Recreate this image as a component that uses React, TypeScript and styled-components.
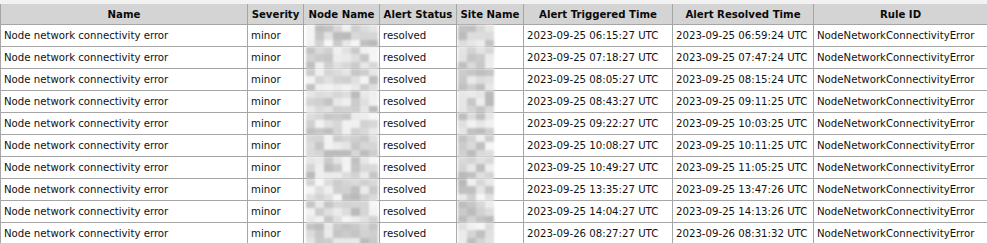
import React from "react";
import styled, { createGlobalStyle } from "styled-components";

const GlobalStyle = createGlobalStyle`
  html, body {
    margin: 0;
    padding: 0;
    background: #f2f2f2;
  }
  body {
    font-family: "DejaVu Sans Condensed", "DejaVu Sans", sans-serif;
    font-size: 11.3px;
    color: #111;
  }
`;

const Page = styled.div`
  padding-top: 4px;
  width: 987px;
`;

const Table = styled.table`
  width: 987px;
  border-collapse: collapse;
  table-layout: fixed;
  background: #fff;
`;

const Th = styled.th`
  height: 20px;
  padding: 0 3px;
  background: #d4d4d4;
  border: 1px solid #a6a6a6;
  border-top: none;
  font-weight: bold;
  text-align: center;
  white-space: nowrap;
  color: #0a0a0a;
`;

const Td = styled.td`
  height: 21px;
  padding: 0 3px;
  border: 1px solid #a6a6a6;
  white-space: nowrap;
  vertical-align: middle;
`;

const MaskCell = styled.td`
  height: 21px;
  padding: 0;
  border: 1px solid #a6a6a6;
  vertical-align: middle;
`;

const Mosaic = styled.div<{ $cols: number; $offset: number }>`
  position: relative;
  z-index: 1;
  height: 23px;
  margin: -1px 0 -2px ${(p) => p.$offset}px;
  display: grid;
  grid-template-columns: repeat(${(p) => p.$cols}, 9px);
  grid-template-rows: repeat(3, 1fr);
  width: ${(p) => p.$cols * 9}px;
  filter: blur(0.8px);
`;

const Tile = styled.div<{ $shade: number }>`
  background: rgb(${(p) => p.$shade}, ${(p) => p.$shade}, ${(p) => p.$shade});
`;

const shade = (seed: number) => {
  const x = Math.sin(seed * 12.9898) * 43758.5453;
  const f = x - Math.floor(x);
  return Math.round(185 + f * 62);
};

const Redacted = ({ cols, offset, seed }: { cols: number; offset: number; seed: number }) => (
  <Mosaic $cols={cols} $offset={offset}>
    {Array.from({ length: cols * 3 }, (_, i) => (
      <Tile key={i} $shade={shade(seed * 100 + i + 1)} />
    ))}
  </Mosaic>
);

const widths = [247, 56, 76, 77, 67, 149, 141, 174];

const rows = [
  ["2023-09-25 06:15:27 UTC", "2023-09-25 06:59:24 UTC"],
  ["2023-09-25 07:18:27 UTC", "2023-09-25 07:47:24 UTC"],
  ["2023-09-25 08:05:27 UTC", "2023-09-25 08:15:24 UTC"],
  ["2023-09-25 08:43:27 UTC", "2023-09-25 09:11:25 UTC"],
  ["2023-09-25 09:22:27 UTC", "2023-09-25 10:03:25 UTC"],
  ["2023-09-25 10:08:27 UTC", "2023-09-25 10:11:25 UTC"],
  ["2023-09-25 10:49:27 UTC", "2023-09-25 11:05:25 UTC"],
  ["2023-09-25 13:35:27 UTC", "2023-09-25 13:47:26 UTC"],
  ["2023-09-25 14:04:27 UTC", "2023-09-25 14:13:26 UTC"],
  ["2023-09-26 08:27:27 UTC", "2023-09-26 08:31:32 UTC"],
];

const headers = [
  "Name",
  "Severity",
  "Node Name",
  "Alert Status",
  "Site Name",
  "Alert Triggered Time",
  "Alert Resolved Time",
  "Rule ID",
];

export default function App() {
  return (
    <Page>
      <GlobalStyle />
      <Table>
        <colgroup>
          {widths.map((w, i) => (
            <col key={i} style={{ width: w }} />
          ))}
        </colgroup>
        <thead>
          <tr>
            {headers.map((h) => (
              <Th key={h}>{h}</Th>
            ))}
          </tr>
        </thead>
        <tbody>
          {rows.map(([trig, res], i) => (
            <tr key={i}>
              <Td>Node network connectivity error</Td>
              <Td>minor</Td>
              <MaskCell>
                <Redacted cols={8} offset={2} seed={i + 1} />
              </MaskCell>
              <Td>resolved</Td>
              <MaskCell>
                <Redacted cols={4} offset={1} seed={i + 31} />
              </MaskCell>
              <Td>{trig}</Td>
              <Td>{res}</Td>
              <Td>NodeNetworkConnectivityError</Td>
            </tr>
          ))}
        </tbody>
      </Table>
    </Page>
  );
}
